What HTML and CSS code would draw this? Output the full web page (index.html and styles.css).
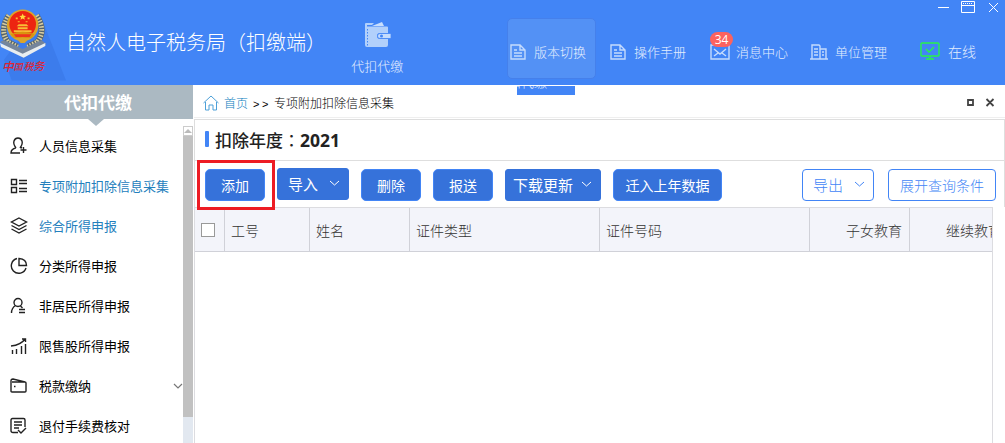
FILE: index.html
```html
<!DOCTYPE html>
<html lang="zh-CN">
<head>
    <meta charset="UTF-8">
    <title>自然人电子税务局（扣缴端）</title>
    <link rel="stylesheet" href="styles.css">
</head>
<body>
    <header class="header">
        <svg class="logo" width="68" height="85" viewBox="0 0 68 85">
            <path d="M40 12L67 81H12L4 60z" fill="#3c7cec"/>
            <!-- wheat ears -->
            <path d="M9 15Q-1 30 8 42L18 47M37 15Q47 30 38 42L28 47" fill="none" stroke="#56636b" stroke-width="6"/>
            <path d="M9 15Q-1 30 8 42L18 47M37 15Q47 30 38 42L28 47" fill="none" stroke="#d8cda0" stroke-width="5" stroke-dasharray="1.5 1.5"/>
            <!-- ribbon -->
            <path d="M0 42L4 40L23 49L42 40L47 44L24 58z" fill="#75859a"/>
            <path d="M0 43L23 54L46 43V46L24 58L1 47z" fill="#e8edf0"/>
            <circle cx="23" cy="25" r="16" fill="#dca429"/>
            <circle cx="23" cy="24" r="13.5" fill="#ed2411"/>
            <path d="M23 13l1 2.300 2.500.2-1.900 1.600.6 2.400-2.200-1.300-2.200 1.300.6-2.400-1.900-1.600 2.500-.2z" fill="#ffd83d"/>
            <path d="M16 17h2v2h-2zM28 17h2v2h-2zM18 21h2v1h-2zM26 21h2v1h-2zM19 24h8l2 2H17zM18 27h10v2H18zM14 30h18v2H14z" fill="#f8bc35"/>
            <path d="M11 34Q23 29 35 34L32 38H14z" fill="#d9940e"/>
            <path d="M14 34h18l-2 3H16z" fill="#ef351d"/>
            <path d="M18 40Q23 35 28 40L25 43H21z" fill="#dca429"/>
            <g class="logo-text">
                <text x="2" y="71" font-size="12">中</text>
                <text x="14" y="70" font-size="9">国</text>
                <text x="24" y="70" font-size="10">税</text>
                <text x="34" y="70" font-size="11">务</text>
            </g>
        </svg>
        <h1 class="app-name">自然人电子税务局（扣缴端）</h1>
        <div class="module">
            <svg width="28" height="27" viewBox="0 0 28 27">
                <path d="M9 4L19 0l2 4z" fill="#c8defd"/>
                <path d="M2 2q0-1 1-1h8L9 3H4v1.500h20q1 0 1 1V11h-8q-3 0-3 3t3 3h8v6q0 2-2 2H4q-2 0-2-2z" fill="#b2d0fb"/>
                <path d="M17 11.500h11v5H17q-2.500 0-2.500-2.500t2.500-2.500z" fill="#c5dcfd" stroke="#4285f6" stroke-width=".8"/>
                <circle cx="18.500" cy="14" r="1.500" fill="#4285f6"/>
                <path d="M4.500 7v17" stroke="#4285f6" stroke-dasharray="1.500 1.500"/>
            </svg>
            <span>代扣代缴</span>
        </div>
        <nav class="top-nav">
            <a class="nav-item current">
                <svg width="16" height="16" viewBox="0 0 16 16"><path d="M1 1h9l5 5v9H1zM10 1v5h5M4 6h3M4 9h8M4 12h8"/></svg>
                <span>版本切换</span>
            </a>
            <a class="nav-item manual">
                <svg width="16" height="16" viewBox="0 0 16 16"><path d="M1 1h9l5 5v9H1zM10 1v5h5M4 6h3M4 9h8M4 12h8"/></svg>
                <span>操作手册</span>
            </a>
            <a class="nav-item message">
                <svg width="20" height="16" viewBox="0 0 20 16"><path d="M1 1h18v14H1zM4 5l6 5 6-5M4 12l4-3M16 12l-4-3"/></svg>
                <span>消息中心</span>
                <b class="badge">34</b>
            </a>
            <a class="nav-item company">
                <svg width="18" height="16" viewBox="0 0 18 16"><path d="M0 15h18M2 15V1h7l1 1v13M10 5h6v10M4 5h4M4 8h4M4 11h4M12 8h2M12 11h2"/></svg>
                <span>单位管理</span>
            </a>
            <a class="nav-item online">
                <svg width="20" height="18" viewBox="0 0 20 18"><path d="M2 1h16q1 0 1 1v11q0 1-1 1H2q-1 0-1-1V2q0-1 1-1zM10 14v3M6 17h8M6 7l3 3 5-5"/></svg>
                <span>在线</span>
            </a>
        </nav>
        <div class="win-btns">
            <svg width="62" height="14" viewBox="0 0 62 14"><path d="M0 7.500h11M23.500 1.500h13v11h-13zM23.500 5.500h13M51 3l9 9M60 3l-9 9"/><path d="M25 3.500h10" stroke-dasharray="1 1"/></svg>
        </div>
        <div class="drag-tip"><span>代扣代缴</span></div>
    </header>

    <div class="body">
        <aside class="sidebar">
            <h2 class="side-title">代扣代缴</h2>
            <div class="side-scroll">
                <ul class="menu">
                    <li>
                        <svg width="18" height="18" viewBox="0 0 18 18"><path d="M6 11Q3 7 4 4Q5 1 8 1t4 3q1 3-2 7M6 11Q1 12 1 16h9M10 10l2 1M13.500 10v6M10.500 13h6"/></svg>
                        <span>人员信息采集</span>
                    </li>
                    <li class="active">
                        <svg width="18" height="18" viewBox="0 0 18 18"><path d="M1.500 2.500h5v5h-5zM1.500 10.500h5v5h-5zM9 3.500h8M9 6.500h8M9 11.500h8M9 14.500h8"/></svg>
                        <span>专项附加扣除信息采集</span>
                    </li>
                    <li class="active">
                        <svg width="18" height="18" viewBox="0 0 18 18"><path d="M9 1l7.500 4L9 9 1.500 5zM1.500 8.500L9 12.500l7.500-4M1.500 12L9 16l7.500-4"/></svg>
                        <span>综合所得申报</span>
                    </li>
                    <li>
                        <svg width="18" height="18" viewBox="0 0 18 18"><path d="M7 1.500A7.500 7.500 0 1 0 16 11M9 1.500V8.500h7.500Q16.500 2 9 1.500z"/></svg>
                        <span>分类所得申报</span>
                    </li>
                    <li>
                        <svg width="18" height="18" viewBox="0 0 18 18"><circle cx="8" cy="5.500" r="4"/><path d="M5.500 8.500Q1.500 11 1.500 16M10.500 9l2 2M9 12.500h6M9 15.500h6"/></svg>
                        <span>非居民所得申报</span>
                    </li>
                    <li>
                        <svg width="18" height="18" viewBox="0 0 18 18"><path d="M2.500 17v-4M6.500 17v-5M11.500 17V9M15.500 17V7M1 9q10-1 14-7M12 2h3.500v3"/></svg>
                        <span>限售股所得申报</span>
                    </li>
                    <li>
                        <svg width="18" height="18" viewBox="0 0 18 18"><path d="M2 5h13q1 0 1 1v8q0 1-1 1H2q-1 0-1-1V4q0-2 2-2l12 3M4 9.500h1.500"/></svg>
                        <span>税款缴纳</span>
                        <svg class="arrow" width="10" height="8" viewBox="0 0 10 8"><path d="M1 2l4 4 4-4"/></svg>
                    </li>
                    <li>
                        <svg width="18" height="18" viewBox="0 0 18 18"><path d="M8 15.500H3q-2 0-2-2V3q0-1.500 1.500-1.500h11Q15 1.500 15 3v7M4 5h8M4 8h8M4 11h5M8 13l3 3 5-5"/></svg>
                        <span>退付手续费核对</span>
                    </li>
                </ul>
                <div class="scrollbar">
                    <div class="scroll-up"></div>
                    <div class="thumb"></div>
                </div>
            </div>
        </aside>

        <main class="main">
            <div class="crumb">
                <svg width="16" height="16" viewBox="0 0 16 16"><path d="M.5 8L8 1l7.500 7M2.500 7v8H6v-5h4v5h3.500V7"/></svg>
                <a>首页</a><i>&gt;&gt;</i><span>专项附加扣除信息采集</span>
                <svg class="tab-btns" width="28" height="10" viewBox="0 0 28 10"><path d="M1 2h5v5H1zM19.500 1l7 7M26.500 1l-7 7"/></svg>
            </div>
            <div class="panel">
                <h3 class="year">扣除年度<em>：</em><b>2021</b></h3>
                <div class="toolbar">
                    <span class="add-wrap"><button class="btn">添加</button></span>
                    <button class="btn drop import">导入<svg width="11" height="8" viewBox="0 0 11 8"><path d="M1 2l4.500 4L10 2"/></svg></button>
                    <button class="btn">删除</button>
                    <button class="btn">报送</button>
                    <button class="btn drop update">下载更新<svg width="11" height="8" viewBox="0 0 11 8"><path d="M1 2l4.500 4L10 2"/></svg></button>
                    <button class="btn move">迁入上年数据</button>
                    <button class="btn line drop export">导出<svg width="11" height="8" viewBox="0 0 11 8"><path d="M1 2l4.500 4L10 2"/></svg></button>
                    <button class="btn line query">展开查询条件</button>
                </div>
            </div>
            <div class="table">
                <div class="thead">
                    <div class="check"><i></i></div>
                    <div>工号</div>
                    <div>姓名</div>
                    <div>证件类型</div>
                    <div>证件号码</div>
                    <div class="num">子女教育</div>
                    <div class="num">继续教育</div>
                </div>
            </div>
        </main>
    </div>
</body>
</html>
```
FILE: styles.css
```css
*, *::before, *::after {
    box-sizing: border-box;
}
body {
    margin: 0;
    height: 443px;
    overflow: hidden;
    background: #fff;
    color: #111;
    font: 13px/20px "Noto Sans CJK SC", sans-serif;
    font-weight: 300;
}
svg {
    flex: none;
    fill: none;
    stroke: currentColor;
}
h1, h2, h3, ul {
    margin: 0;
    padding: 0;
    font-weight: normal;
}

/* header */
.header {
    position: relative;
    display: flex;
    height: 85px;
    background: #4285f6;
    color: #e3eefe;
}
.logo {
    width: 67px;
    stroke: none;
}
.logo-text {
    fill: #df2432;
    font-family: "Noto Sans CJK SC", sans-serif;
    font-weight: 500;
    font-style: italic;
}
.app-name {
    width: 285px;
    padding-top: 27px;
    font-size: 20px;
    font-weight: 300;
    line-height: 30px;
    white-space: nowrap;
    text-indent: -1px;
    color: #fff;
}
.module {
    display: flex;
    flex-direction: column;
    align-items: center;
    width: 54px;
    padding-top: 22px;
}
.module svg {
    stroke: none;
}
.module span {
    margin-top: 7px;
    white-space: nowrap;
}
.top-nav {
    display: flex;
    margin: 18px 0 0 101px;
    height: 61px;
}
.nav-item {
    display: flex;
    position: relative;
    align-items: center;
    width: 100px;
    padding: 6px 0 0 4px;
    white-space: nowrap;
}
.nav-item svg {
    margin-right: 8px;
    stroke: #c5dbfd;
    stroke-width: 1.4;
}
.current {
    width: 89px;
    margin: 0 9px 0 2px;
    padding-left: 2px;
    border: 1px solid #4580eb;
    border-radius: 5px;
    background: #5391f5;
}
.manual {
    padding-left: 5px;
}
.message {
    padding-left: 5px;
}
.message svg {
    margin-right: 6px;
}
.company {
    padding-left: 5px;
}
.company svg {
    margin-right: 7px;
}
.online {
    padding: 4px 0 0 15px;
    font-size: 14px;
}
.online svg {
    stroke: #28f34a;
}
.badge {
    position: absolute;
    left: 5px;
    top: 14px;
    width: 23px;
    height: 15px;
    border-radius: 8px;
    background: #fc625e;
    color: #fff;
    font: 12px/16px "Open Sans", sans-serif;
    text-align: center;
}
.win-btns {
    position: absolute;
    right: 5px;
    top: 0;
    height: 14px;
    color: #fff;
}
.win-btns svg {
    display: block;
}
.drag-tip {
    position: absolute;
    z-index: 2;
    left: 517px;
    top: 86px;
    width: 58px;
    height: 9px;
    overflow: hidden;
    background: #4285f6;
    line-height: 20px;
}
.drag-tip span {
    display: block;
    margin: -14px 0 0 -22px;
}

/* sidebar */
.body {
    display: flex;
    height: 358px;
}
.sidebar {
    width: 193px;
}
.side-title {
    position: relative;
    height: 34px;
    padding-left: 3px;
    background: #abb9c2;
    color: #fff;
    font-size: 17px;
    font-weight: bold;
    line-height: 34px;
    text-align: center;
}
.side-title::after {
    content: "";
    position: absolute;
    left: 88px;
    top: 34px;
    border: 8px solid transparent;
    border-top: 7px solid #abb9c2;
    border-bottom: 0;
}
.side-scroll {
    display: flex;
    height: 324px;
    padding-top: 7px;
}
.menu {
    width: 183px;
    list-style: none;
}
.menu li {
    display: flex;
    align-items: center;
    height: 40px;
    padding: 0 0 1px 10px;
    color: #000;
}
.menu svg {
    margin-right: 11px;
    stroke: #222;
    stroke-width: 1.4;
}
.menu .active {
    color: #2480bd;
}
.menu .arrow {
    margin: 0 0 0 auto;
    stroke: #777;
    stroke-width: 1.2;
}
.scrollbar {
    width: 10px;
    background: #e2e8f0;
}
.scroll-up {
    height: 10px;
    padding-top: 2px;
    border: 1px solid #ccc;
    background: #fff;
}
.scroll-up::before {
    content: "";
    display: block;
    width: 8px;
    height: 4px;
    border: 4px solid transparent;
    border-top: 0;
    border-bottom: 4px solid #bbb;
}
.thumb {
    height: 281px;
    background: #c1c1c1;
}

/* main */
.main {
    width: 812px;
    padding-left: 1px;
}
.crumb {
    display: flex;
    align-items: center;
    height: 33px;
    padding: 4px 10px 0 9px;
    border-bottom: 1px solid #efefef;
    font-size: 12px;
    color: #000;
}
.crumb svg {
    margin-right: 5px;
    stroke: #4da0d8;
}
.crumb a {
    color: #0c80c0;
}
.crumb i {
    width: 26px;
    padding: 1px 0 0 5px;
    font: 11px "Liberation Sans", sans-serif;
    letter-spacing: 2.5px;
}
.crumb .tab-btns {
    margin: 0 0 0 auto;
    stroke: #444;
    stroke-width: 1.8;
}
.panel {
    height: 88px;
    margin-top: 1px;
    border: 1px solid #dedede;
    border-bottom: 0;
}
.year {
    display: flex;
    align-items: center;
    height: 41px;
    padding-left: 10px;
    border-bottom: 1px solid #dedede;
    color: #222;
    font-size: 17px;
    font-weight: 500;
}
.year::before {
    content: "";
    width: 4px;
    height: 16px;
    margin: -2px 6px 0 0;
    border-radius: 1px;
    background: #4285f6;
}
.year em {
    font-family: "Noto Sans CJK TC", sans-serif;
    font-style: normal;
    font-weight: 400;
}
.year b {
    font-family: "Open Sans", sans-serif;
    font-size: 17.5px;
    font-weight: 700;
}
.toolbar {
    display: flex;
    height: 46px;
    padding: 8px 8px 0 10px;
}
.btn {
    width: 60px;
    height: 32px;
    margin-right: 12px;
    padding: 0;
    border: 1px solid #4285f6;
    border-radius: 5px;
    background: #3672da;
    color: #fff;
    font: 400 14px "Noto Sans CJK SC", sans-serif;
    white-space: nowrap;
}
.add-wrap {
    position: relative;
}
/* frame over the add button */
.add-wrap::after {
    content: "";
    position: absolute;
    left: -8px;
    top: -9px;
    width: 78px;
    height: 50px;
    border: 3px solid #ed1c24;
}
.drop {
    display: flex;
    align-items: center;
    justify-content: space-between;
    padding: 0 8px 2px 10px;
    border-color: #3672da;
    border-radius: 3px;
    font-size: 15px;
}
.import {
    width: 72px;
    margin-top: -1px;
}
.update {
    width: 96px;
    padding-left: 7px;
}
.move {
    width: 109px;
}
.line {
    border-color: #4285f6;
    border-radius: 4px;
    background: #fff;
    color: #4285f6;
    font-weight: 300;
}
.export {
    width: 72px;
    margin: 0 14px 0 auto;
}
.query {
    width: 108px;
    margin: 0;
}
.table {
    width: 799px;
    height: 236px;
    border: 1px solid #dcdce0;
    border-bottom: 0;
    overflow: hidden;
}
.thead {
    display: grid;
    grid-template-columns: 30px 85px 100px 190px 210px 100px 100px;
    height: 44px;
    border-bottom: 1px solid #d0d1d8;
    background: #f3f4fa;
    color: #333;
    font-size: 14px;
    line-height: 44px;
}
.thead div {
    padding: 0 7px 0 6px;
    border-right: 1px solid #d0d1d8;
}
.thead .num {
    text-align: right;
}
.thead .check {
    padding: 15px 0 0 6px;
}
.check i {
    display: block;
    width: 14px;
    height: 14px;
    border: 1px solid #999;
    background: #fff;
}
```
